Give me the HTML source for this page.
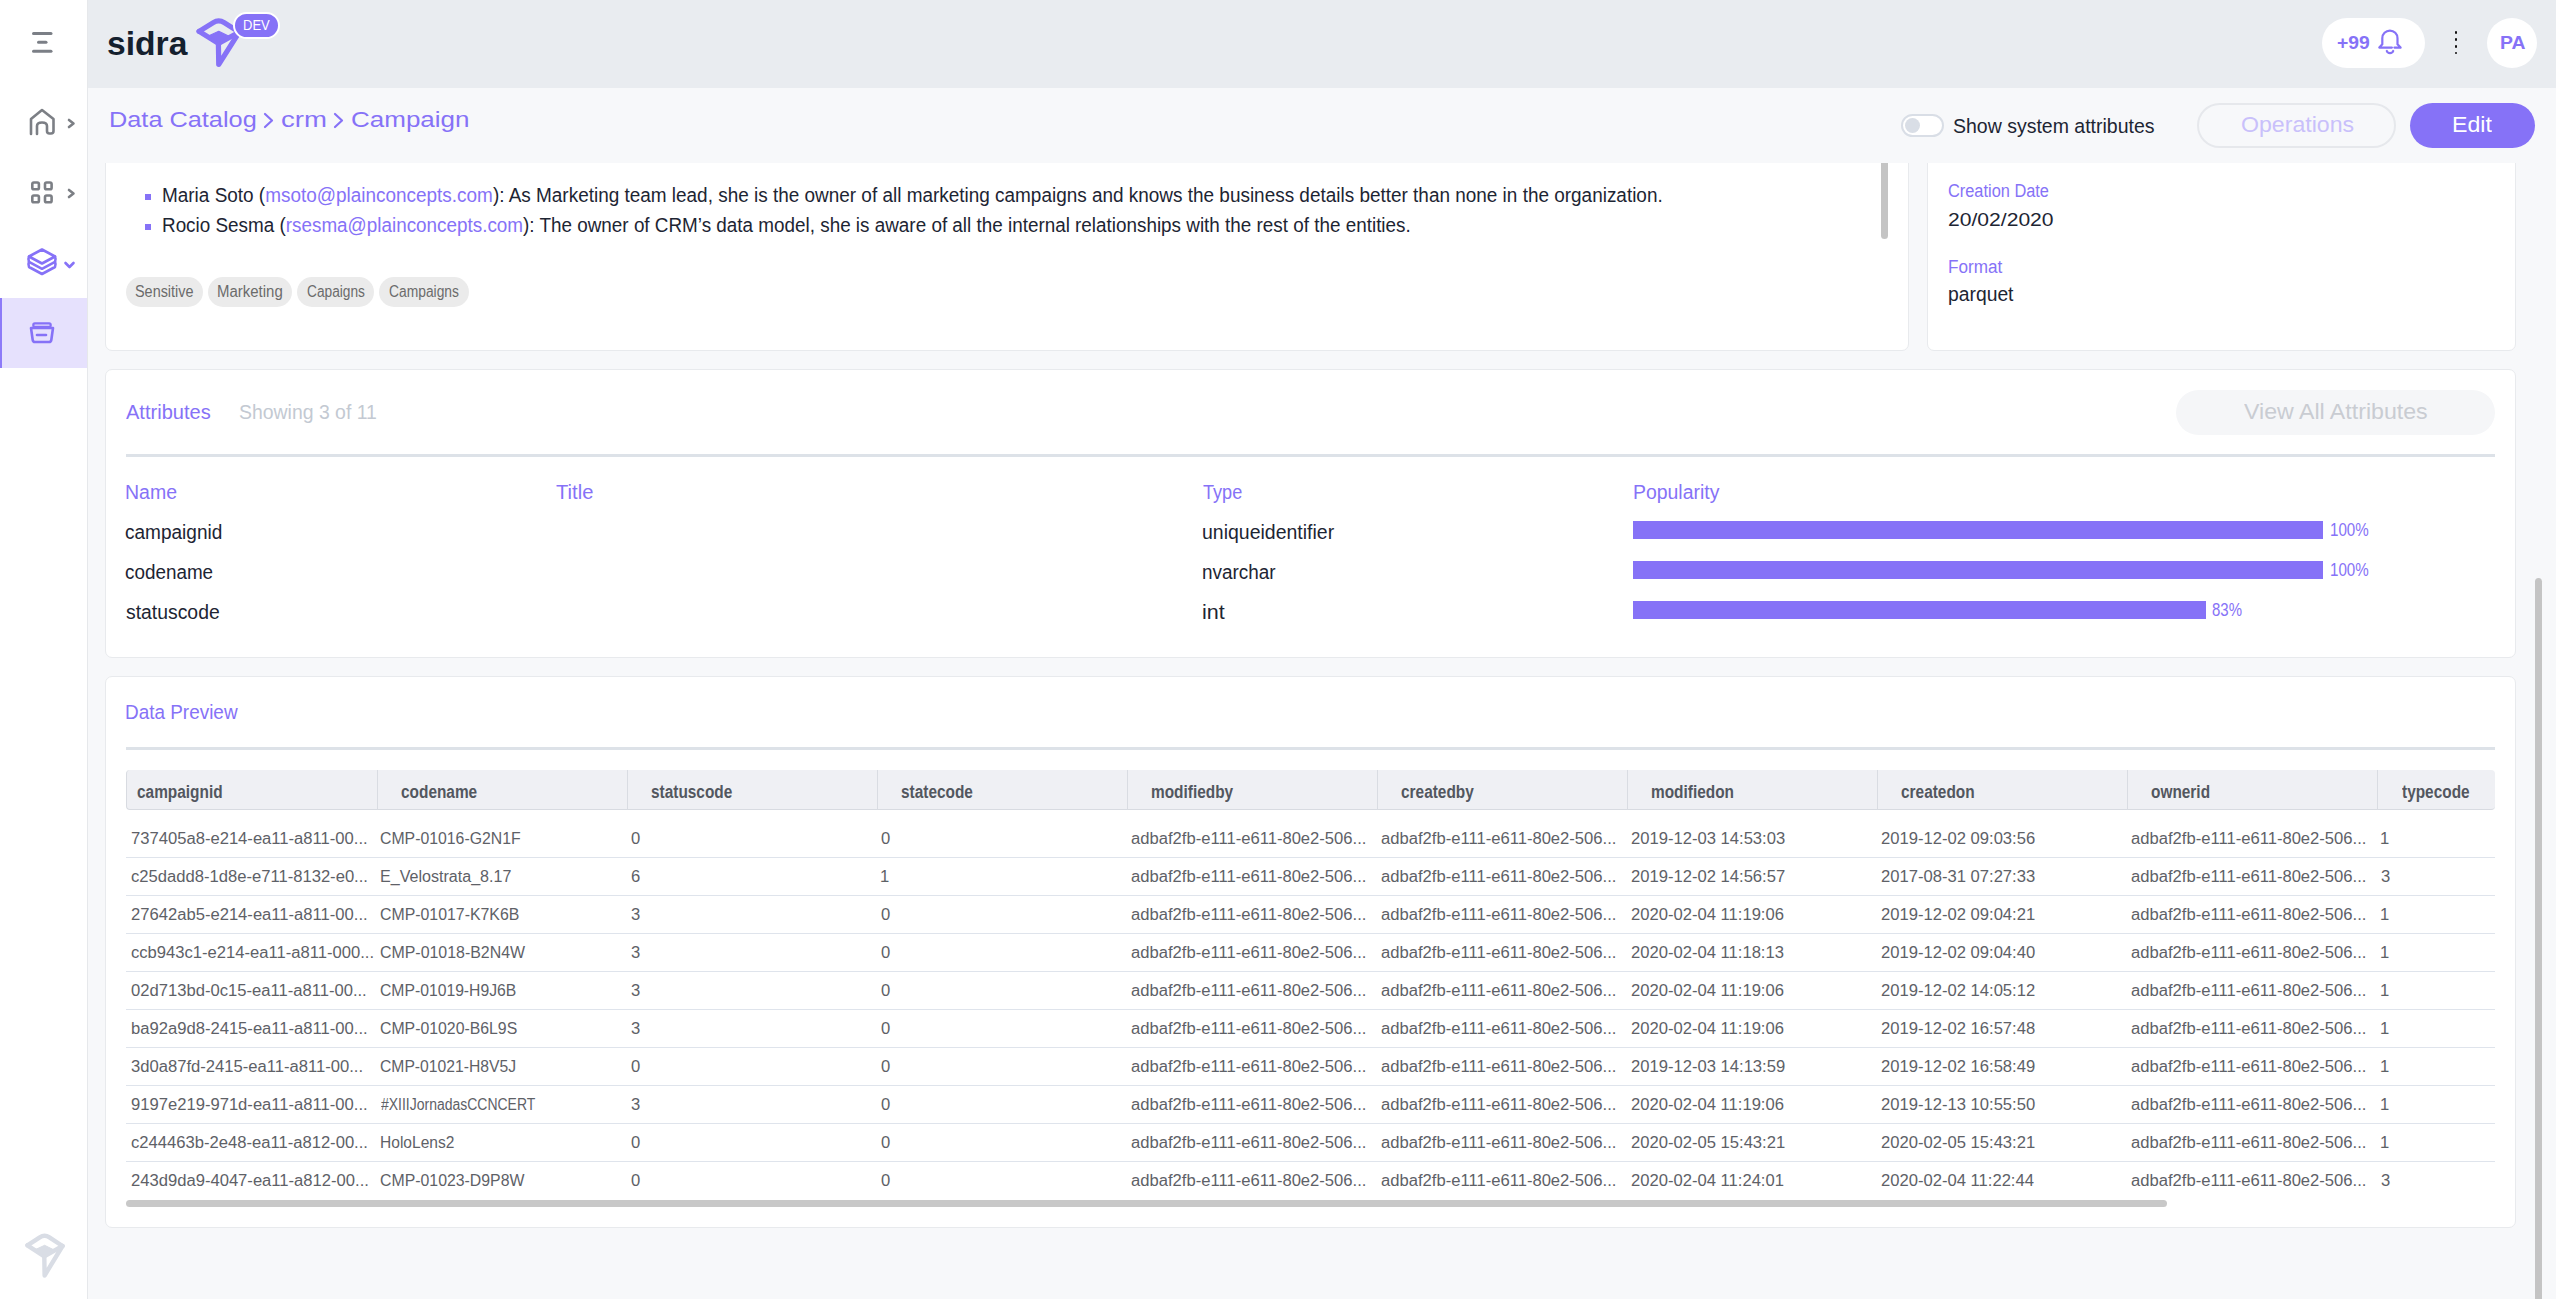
<!DOCTYPE html>
<html><head><meta charset="utf-8">
<style>
*{margin:0;padding:0;box-sizing:border-box}
html,body{width:2556px;height:1299px;overflow:hidden;background:#f7f8fa;font-family:"Liberation Sans",sans-serif}
#root{position:relative;width:2556px;height:1299px;overflow:hidden;background:#f7f8fa}
.a{position:absolute}
.t{position:absolute;line-height:1;white-space:nowrap;transform-origin:0 0}
.card{position:absolute;background:#fff;border:1px solid #e8eaed;border-radius:7px}
.tag{position:absolute;top:277px;height:30px;background:#ebebeb;border-radius:15px}
.hc{position:absolute;top:770px;height:40px;border-left:1px solid #d9dce2}
.rl{position:absolute;left:126px;width:2369px;height:1px;background:#dfe4ec}
</style></head><body><div id="root">
<div class="card" style="left:105px;top:120px;width:1804px;height:231px"></div>
<div class="card" style="left:1927px;top:120px;width:589px;height:231px"></div>
<div class="card" style="left:105px;top:369px;width:2411px;height:289px"></div>
<div class="card" style="left:105px;top:676px;width:2411px;height:552px"></div>
<div class="a" style="left:145px;top:194px;width:6px;height:6px;background:#8672f7"></div>
<div class="a" style="left:145px;top:224px;width:6px;height:6px;background:#8672f7"></div>
<div class="t" style="left:162.08px;top:185.07px;font-size:20px;color:#1d2533;transform:scaleX(0.9471);">Maria Soto (<span style="color:#8672f7">msoto@plainconcepts.com</span>): As Marketing team lead, she is the owner of all marketing campaigns and knows the business details better than none in the organization.</div>
<div class="t" style="left:162.09px;top:215.07px;font-size:20px;color:#1d2533;transform:scaleX(0.9435);">Rocio Sesma (<span style="color:#8672f7">rsesma@plainconcepts.com</span>): The owner of CRM’s data model, she is aware of all the internal relationships with the rest of the entities.</div>
<div class="a" style="left:1881px;top:150px;width:7px;height:89px;background:#c4c4c4;border-radius:4px"></div>
<div class="tag" style="left:126px;width:77px"></div>
<div class="t" style="left:135.28px;top:283.66px;font-size:16px;color:#6b6b6b;transform:scaleX(0.9012);">Sensitive</div>
<div class="tag" style="left:208px;width:84px"></div>
<div class="t" style="left:217.30px;top:283.66px;font-size:16px;color:#6b6b6b;transform:scaleX(0.9360);">Marketing</div>
<div class="tag" style="left:297px;width:77px"></div>
<div class="t" style="left:306.71px;top:283.66px;font-size:16px;color:#6b6b6b;transform:scaleX(0.8575);">Capaigns</div>
<div class="tag" style="left:379px;width:90px"></div>
<div class="t" style="left:388.81px;top:283.66px;font-size:16px;color:#6b6b6b;transform:scaleX(0.8647);">Campaigns</div>
<div class="t" style="left:1947.88px;top:181.56px;font-size:18px;color:#8672f7;transform:scaleX(0.9088);">Creation Date</div>
<div class="t" style="left:1947.85px;top:209.62px;font-size:19px;color:#1d2533;transform:scaleX(1.1104);">20/02/2020</div>
<div class="t" style="left:1947.53px;top:257.76px;font-size:18px;color:#8672f7;transform:scaleX(0.9524);">Format</div>
<div class="t" style="left:1947.74px;top:285.39px;font-size:19.5px;color:#1d2533;transform:scaleX(0.9901);">parquet</div>
<div class="t" style="left:126.00px;top:401.85px;font-size:20.5px;color:#8672f7;transform:scaleX(0.9779);">Attributes</div>
<div class="t" style="left:239.03px;top:401.85px;font-size:20.5px;color:#c3c9d2;transform:scaleX(0.9477);">Showing 3 of 11</div>
<div class="a" style="left:2176px;top:390px;width:319px;height:45px;background:#f5f6f8;border-radius:23px"></div>
<div class="t" style="left:2244.00px;top:400.78px;font-size:22px;color:#c9ccd2;transform:scaleX(1.0529);">View All Attributes</div>
<div class="a" style="left:126px;top:454px;width:2369px;height:3px;background:#dde2e8"></div>
<div class="t" style="left:124.54px;top:482.47px;font-size:20px;color:#8672f7;transform:scaleX(0.9744);">Name</div>
<div class="t" style="left:556.30px;top:482.47px;font-size:20px;color:#8672f7;transform:scaleX(1.0084);">Title</div>
<div class="t" style="left:1203.14px;top:482.47px;font-size:20px;color:#8672f7;transform:scaleX(0.9048);">Type</div>
<div class="t" style="left:1632.75px;top:482.47px;font-size:20px;color:#8672f7;transform:scaleX(0.9714);">Popularity</div>
<div class="t" style="left:125.34px;top:522.07px;font-size:20px;color:#1d2533;transform:scaleX(0.9511);">campaignid</div>
<div class="t" style="left:1202.33px;top:522.07px;font-size:20px;color:#1d2533;transform:scaleX(0.9739);">uniqueidentifier</div>
<div class="a" style="left:1633px;top:521px;width:690px;height:18px;background:#8672f7"></div>
<div class="t" style="left:2329.84px;top:521.73px;font-size:17.8px;color:#8672f7;transform:scaleX(0.8530);">100%</div>
<div class="t" style="left:125.35px;top:562.07px;font-size:20px;color:#1d2533;transform:scaleX(0.9432);">codename</div>
<div class="t" style="left:1202.18px;top:562.07px;font-size:20px;color:#1d2533;transform:scaleX(0.9462);">nvarchar</div>
<div class="a" style="left:1633px;top:561px;width:690px;height:18px;background:#8672f7"></div>
<div class="t" style="left:2329.84px;top:561.73px;font-size:17.8px;color:#8672f7;transform:scaleX(0.8530);">100%</div>
<div class="t" style="left:125.52px;top:602.07px;font-size:20px;color:#1d2533;transform:scaleX(0.9685);">statuscode</div>
<div class="t" style="left:1201.99px;top:602.07px;font-size:20px;color:#1d2533;transform:scaleX(1.0765);">int</div>
<div class="a" style="left:1633px;top:601px;width:573px;height:18px;background:#8672f7"></div>
<div class="t" style="left:2211.60px;top:601.73px;font-size:17.8px;color:#8672f7;transform:scaleX(0.8427);">83%</div>
<div class="t" style="left:124.89px;top:702.35px;font-size:20.5px;color:#8672f7;transform:scaleX(0.9232);">Data Preview</div>
<div class="a" style="left:126px;top:747px;width:2369px;height:3px;background:#dde2e8"></div>
<div class="a" style="left:126px;top:770px;width:2369px;height:40px;background:#eff0f4;border-bottom:1px solid #d8dbe1;border-left:1px solid #d8dbe1;border-radius:4px"></div>
<div class="t" style="left:137.48px;top:782.76px;font-size:18px;color:#53575f;font-weight:bold;transform:scaleX(0.8557);">campaignid</div>
<div class="hc" style="left:377px"></div>
<div class="t" style="left:401.28px;top:782.76px;font-size:18px;color:#53575f;font-weight:bold;transform:scaleX(0.8557);">codename</div>
<div class="hc" style="left:627px"></div>
<div class="t" style="left:651.28px;top:782.76px;font-size:18px;color:#53575f;font-weight:bold;transform:scaleX(0.8557);">statuscode</div>
<div class="hc" style="left:877px"></div>
<div class="t" style="left:901.28px;top:782.76px;font-size:18px;color:#53575f;font-weight:bold;transform:scaleX(0.8557);">statecode</div>
<div class="hc" style="left:1127px"></div>
<div class="t" style="left:1150.98px;top:782.76px;font-size:18px;color:#53575f;font-weight:bold;transform:scaleX(0.8557);">modifiedby</div>
<div class="hc" style="left:1377px"></div>
<div class="t" style="left:1401.28px;top:782.76px;font-size:18px;color:#53575f;font-weight:bold;transform:scaleX(0.8557);">createdby</div>
<div class="hc" style="left:1627px"></div>
<div class="t" style="left:1650.98px;top:782.76px;font-size:18px;color:#53575f;font-weight:bold;transform:scaleX(0.8557);">modifiedon</div>
<div class="hc" style="left:1877px"></div>
<div class="t" style="left:1901.28px;top:782.76px;font-size:18px;color:#53575f;font-weight:bold;transform:scaleX(0.8557);">createdon</div>
<div class="hc" style="left:2127px"></div>
<div class="t" style="left:2151.28px;top:782.76px;font-size:18px;color:#53575f;font-weight:bold;transform:scaleX(0.8557);">ownerid</div>
<div class="hc" style="left:2377px"></div>
<div class="t" style="left:2401.75px;top:782.76px;font-size:18px;color:#53575f;font-weight:bold;transform:scaleX(0.8557);">typecode</div>
<div class="t" style="left:130.77px;top:830.96px;font-size:16px;color:#5e6167;transform:scaleX(1.0378);">737405a8-e214-ea11-a811-00...</div>
<div class="t" style="left:380.21px;top:830.96px;font-size:16px;color:#5e6167;transform:scaleX(0.9886);">CMP-01016-G2N1F</div>
<div class="t" style="left:630.94px;top:830.96px;font-size:16px;color:#5e6167;transform:scaleX(1.0378);">0</div>
<div class="t" style="left:880.94px;top:830.96px;font-size:16px;color:#5e6167;transform:scaleX(1.0378);">0</div>
<div class="t" style="left:1130.94px;top:830.96px;font-size:16px;color:#5e6167;transform:scaleX(1.0378);">adbaf2fb-e111-e611-80e2-506...</div>
<div class="t" style="left:1380.94px;top:830.96px;font-size:16px;color:#5e6167;transform:scaleX(1.0378);">adbaf2fb-e111-e611-80e2-506...</div>
<div class="t" style="left:1630.77px;top:830.96px;font-size:16px;color:#5e6167;transform:scaleX(1.0378);">2019-12-03 14:53:03</div>
<div class="t" style="left:1880.77px;top:830.96px;font-size:16px;color:#5e6167;transform:scaleX(1.0378);">2019-12-02 09:03:56</div>
<div class="t" style="left:2130.94px;top:830.96px;font-size:16px;color:#5e6167;transform:scaleX(1.0378);">adbaf2fb-e111-e611-80e2-506...</div>
<div class="t" style="left:2380.44px;top:830.96px;font-size:16px;color:#5e6167;transform:scaleX(1.0378);">1</div>
<div class="rl" style="top:857px"></div>
<div class="t" style="left:130.94px;top:868.96px;font-size:16px;color:#5e6167;transform:scaleX(1.0378);">c25dadd8-1d8e-e711-8132-e0...</div>
<div class="t" style="left:379.71px;top:868.96px;font-size:16px;color:#5e6167;transform:scaleX(1.0047);">E_Velostrata_8.17</div>
<div class="t" style="left:630.77px;top:868.96px;font-size:16px;color:#5e6167;transform:scaleX(1.0378);">6</div>
<div class="t" style="left:880.44px;top:868.96px;font-size:16px;color:#5e6167;transform:scaleX(1.0378);">1</div>
<div class="t" style="left:1130.94px;top:868.96px;font-size:16px;color:#5e6167;transform:scaleX(1.0378);">adbaf2fb-e111-e611-80e2-506...</div>
<div class="t" style="left:1380.94px;top:868.96px;font-size:16px;color:#5e6167;transform:scaleX(1.0378);">adbaf2fb-e111-e611-80e2-506...</div>
<div class="t" style="left:1630.77px;top:868.96px;font-size:16px;color:#5e6167;transform:scaleX(1.0378);">2019-12-02 14:56:57</div>
<div class="t" style="left:1880.77px;top:868.96px;font-size:16px;color:#5e6167;transform:scaleX(1.0378);">2017-08-31 07:27:33</div>
<div class="t" style="left:2130.94px;top:868.96px;font-size:16px;color:#5e6167;transform:scaleX(1.0378);">adbaf2fb-e111-e611-80e2-506...</div>
<div class="t" style="left:2380.94px;top:868.96px;font-size:16px;color:#5e6167;transform:scaleX(1.0378);">3</div>
<div class="rl" style="top:895px"></div>
<div class="t" style="left:130.77px;top:906.96px;font-size:16px;color:#5e6167;transform:scaleX(1.0378);">27642ab5-e214-ea11-a811-00...</div>
<div class="t" style="left:380.21px;top:906.96px;font-size:16px;color:#5e6167;transform:scaleX(0.9915);">CMP-01017-K7K6B</div>
<div class="t" style="left:630.94px;top:906.96px;font-size:16px;color:#5e6167;transform:scaleX(1.0378);">3</div>
<div class="t" style="left:880.94px;top:906.96px;font-size:16px;color:#5e6167;transform:scaleX(1.0378);">0</div>
<div class="t" style="left:1130.94px;top:906.96px;font-size:16px;color:#5e6167;transform:scaleX(1.0378);">adbaf2fb-e111-e611-80e2-506...</div>
<div class="t" style="left:1380.94px;top:906.96px;font-size:16px;color:#5e6167;transform:scaleX(1.0378);">adbaf2fb-e111-e611-80e2-506...</div>
<div class="t" style="left:1630.77px;top:906.96px;font-size:16px;color:#5e6167;transform:scaleX(1.0378);">2020-02-04 11:19:06</div>
<div class="t" style="left:1880.77px;top:906.96px;font-size:16px;color:#5e6167;transform:scaleX(1.0378);">2019-12-02 09:04:21</div>
<div class="t" style="left:2130.94px;top:906.96px;font-size:16px;color:#5e6167;transform:scaleX(1.0378);">adbaf2fb-e111-e611-80e2-506...</div>
<div class="t" style="left:2380.44px;top:906.96px;font-size:16px;color:#5e6167;transform:scaleX(1.0378);">1</div>
<div class="rl" style="top:933px"></div>
<div class="t" style="left:130.94px;top:944.96px;font-size:16px;color:#5e6167;transform:scaleX(1.0378);">ccb943c1-e214-ea11-a811-000...</div>
<div class="t" style="left:380.20px;top:944.96px;font-size:16px;color:#5e6167;transform:scaleX(0.9948);">CMP-01018-B2N4W</div>
<div class="t" style="left:630.94px;top:944.96px;font-size:16px;color:#5e6167;transform:scaleX(1.0378);">3</div>
<div class="t" style="left:880.94px;top:944.96px;font-size:16px;color:#5e6167;transform:scaleX(1.0378);">0</div>
<div class="t" style="left:1130.94px;top:944.96px;font-size:16px;color:#5e6167;transform:scaleX(1.0378);">adbaf2fb-e111-e611-80e2-506...</div>
<div class="t" style="left:1380.94px;top:944.96px;font-size:16px;color:#5e6167;transform:scaleX(1.0378);">adbaf2fb-e111-e611-80e2-506...</div>
<div class="t" style="left:1630.77px;top:944.96px;font-size:16px;color:#5e6167;transform:scaleX(1.0378);">2020-02-04 11:18:13</div>
<div class="t" style="left:1880.77px;top:944.96px;font-size:16px;color:#5e6167;transform:scaleX(1.0378);">2019-12-02 09:04:40</div>
<div class="t" style="left:2130.94px;top:944.96px;font-size:16px;color:#5e6167;transform:scaleX(1.0378);">adbaf2fb-e111-e611-80e2-506...</div>
<div class="t" style="left:2380.44px;top:944.96px;font-size:16px;color:#5e6167;transform:scaleX(1.0378);">1</div>
<div class="rl" style="top:971px"></div>
<div class="t" style="left:130.94px;top:982.96px;font-size:16px;color:#5e6167;transform:scaleX(1.0378);">02d713bd-0c15-ea11-a811-00...</div>
<div class="t" style="left:380.21px;top:982.96px;font-size:16px;color:#5e6167;transform:scaleX(0.9824);">CMP-01019-H9J6B</div>
<div class="t" style="left:630.94px;top:982.96px;font-size:16px;color:#5e6167;transform:scaleX(1.0378);">3</div>
<div class="t" style="left:880.94px;top:982.96px;font-size:16px;color:#5e6167;transform:scaleX(1.0378);">0</div>
<div class="t" style="left:1130.94px;top:982.96px;font-size:16px;color:#5e6167;transform:scaleX(1.0378);">adbaf2fb-e111-e611-80e2-506...</div>
<div class="t" style="left:1380.94px;top:982.96px;font-size:16px;color:#5e6167;transform:scaleX(1.0378);">adbaf2fb-e111-e611-80e2-506...</div>
<div class="t" style="left:1630.77px;top:982.96px;font-size:16px;color:#5e6167;transform:scaleX(1.0378);">2020-02-04 11:19:06</div>
<div class="t" style="left:1880.77px;top:982.96px;font-size:16px;color:#5e6167;transform:scaleX(1.0378);">2019-12-02 14:05:12</div>
<div class="t" style="left:2130.94px;top:982.96px;font-size:16px;color:#5e6167;transform:scaleX(1.0378);">adbaf2fb-e111-e611-80e2-506...</div>
<div class="t" style="left:2380.44px;top:982.96px;font-size:16px;color:#5e6167;transform:scaleX(1.0378);">1</div>
<div class="rl" style="top:1009px"></div>
<div class="t" style="left:130.60px;top:1020.96px;font-size:16px;color:#5e6167;transform:scaleX(1.0378);">ba92a9d8-2415-ea11-a811-00...</div>
<div class="t" style="left:380.21px;top:1020.96px;font-size:16px;color:#5e6167;transform:scaleX(0.9889);">CMP-01020-B6L9S</div>
<div class="t" style="left:630.94px;top:1020.96px;font-size:16px;color:#5e6167;transform:scaleX(1.0378);">3</div>
<div class="t" style="left:880.94px;top:1020.96px;font-size:16px;color:#5e6167;transform:scaleX(1.0378);">0</div>
<div class="t" style="left:1130.94px;top:1020.96px;font-size:16px;color:#5e6167;transform:scaleX(1.0378);">adbaf2fb-e111-e611-80e2-506...</div>
<div class="t" style="left:1380.94px;top:1020.96px;font-size:16px;color:#5e6167;transform:scaleX(1.0378);">adbaf2fb-e111-e611-80e2-506...</div>
<div class="t" style="left:1630.77px;top:1020.96px;font-size:16px;color:#5e6167;transform:scaleX(1.0378);">2020-02-04 11:19:06</div>
<div class="t" style="left:1880.77px;top:1020.96px;font-size:16px;color:#5e6167;transform:scaleX(1.0378);">2019-12-02 16:57:48</div>
<div class="t" style="left:2130.94px;top:1020.96px;font-size:16px;color:#5e6167;transform:scaleX(1.0378);">adbaf2fb-e111-e611-80e2-506...</div>
<div class="t" style="left:2380.44px;top:1020.96px;font-size:16px;color:#5e6167;transform:scaleX(1.0378);">1</div>
<div class="rl" style="top:1047px"></div>
<div class="t" style="left:130.94px;top:1058.96px;font-size:16px;color:#5e6167;transform:scaleX(1.0378);">3d0a87fd-2415-ea11-a811-00...</div>
<div class="t" style="left:380.22px;top:1058.96px;font-size:16px;color:#5e6167;transform:scaleX(0.9803);">CMP-01021-H8V5J</div>
<div class="t" style="left:630.94px;top:1058.96px;font-size:16px;color:#5e6167;transform:scaleX(1.0378);">0</div>
<div class="t" style="left:880.94px;top:1058.96px;font-size:16px;color:#5e6167;transform:scaleX(1.0378);">0</div>
<div class="t" style="left:1130.94px;top:1058.96px;font-size:16px;color:#5e6167;transform:scaleX(1.0378);">adbaf2fb-e111-e611-80e2-506...</div>
<div class="t" style="left:1380.94px;top:1058.96px;font-size:16px;color:#5e6167;transform:scaleX(1.0378);">adbaf2fb-e111-e611-80e2-506...</div>
<div class="t" style="left:1630.77px;top:1058.96px;font-size:16px;color:#5e6167;transform:scaleX(1.0378);">2019-12-03 14:13:59</div>
<div class="t" style="left:1880.77px;top:1058.96px;font-size:16px;color:#5e6167;transform:scaleX(1.0378);">2019-12-02 16:58:49</div>
<div class="t" style="left:2130.94px;top:1058.96px;font-size:16px;color:#5e6167;transform:scaleX(1.0378);">adbaf2fb-e111-e611-80e2-506...</div>
<div class="t" style="left:2380.44px;top:1058.96px;font-size:16px;color:#5e6167;transform:scaleX(1.0378);">1</div>
<div class="rl" style="top:1085px"></div>
<div class="t" style="left:130.77px;top:1096.96px;font-size:16px;color:#5e6167;transform:scaleX(1.0378);">9197e219-971d-ea11-a811-00...</div>
<div class="t" style="left:381.00px;top:1096.96px;font-size:16px;color:#5e6167;transform:scaleX(0.8734);">#XIIIJornadasCCNCERT</div>
<div class="t" style="left:630.94px;top:1096.96px;font-size:16px;color:#5e6167;transform:scaleX(1.0378);">3</div>
<div class="t" style="left:880.94px;top:1096.96px;font-size:16px;color:#5e6167;transform:scaleX(1.0378);">0</div>
<div class="t" style="left:1130.94px;top:1096.96px;font-size:16px;color:#5e6167;transform:scaleX(1.0378);">adbaf2fb-e111-e611-80e2-506...</div>
<div class="t" style="left:1380.94px;top:1096.96px;font-size:16px;color:#5e6167;transform:scaleX(1.0378);">adbaf2fb-e111-e611-80e2-506...</div>
<div class="t" style="left:1630.77px;top:1096.96px;font-size:16px;color:#5e6167;transform:scaleX(1.0378);">2020-02-04 11:19:06</div>
<div class="t" style="left:1880.77px;top:1096.96px;font-size:16px;color:#5e6167;transform:scaleX(1.0378);">2019-12-13 10:55:50</div>
<div class="t" style="left:2130.94px;top:1096.96px;font-size:16px;color:#5e6167;transform:scaleX(1.0378);">adbaf2fb-e111-e611-80e2-506...</div>
<div class="t" style="left:2380.44px;top:1096.96px;font-size:16px;color:#5e6167;transform:scaleX(1.0378);">1</div>
<div class="rl" style="top:1123px"></div>
<div class="t" style="left:130.94px;top:1134.96px;font-size:16px;color:#5e6167;transform:scaleX(1.0378);">c244463b-2e48-ea11-a812-00...</div>
<div class="t" style="left:379.76px;top:1134.96px;font-size:16px;color:#5e6167;transform:scaleX(0.9718);">HoloLens2</div>
<div class="t" style="left:630.94px;top:1134.96px;font-size:16px;color:#5e6167;transform:scaleX(1.0378);">0</div>
<div class="t" style="left:880.94px;top:1134.96px;font-size:16px;color:#5e6167;transform:scaleX(1.0378);">0</div>
<div class="t" style="left:1130.94px;top:1134.96px;font-size:16px;color:#5e6167;transform:scaleX(1.0378);">adbaf2fb-e111-e611-80e2-506...</div>
<div class="t" style="left:1380.94px;top:1134.96px;font-size:16px;color:#5e6167;transform:scaleX(1.0378);">adbaf2fb-e111-e611-80e2-506...</div>
<div class="t" style="left:1630.77px;top:1134.96px;font-size:16px;color:#5e6167;transform:scaleX(1.0378);">2020-02-05 15:43:21</div>
<div class="t" style="left:1880.77px;top:1134.96px;font-size:16px;color:#5e6167;transform:scaleX(1.0378);">2020-02-05 15:43:21</div>
<div class="t" style="left:2130.94px;top:1134.96px;font-size:16px;color:#5e6167;transform:scaleX(1.0378);">adbaf2fb-e111-e611-80e2-506...</div>
<div class="t" style="left:2380.44px;top:1134.96px;font-size:16px;color:#5e6167;transform:scaleX(1.0378);">1</div>
<div class="rl" style="top:1161px"></div>
<div class="t" style="left:130.77px;top:1172.96px;font-size:16px;color:#5e6167;transform:scaleX(1.0378);">243d9da9-4047-ea11-a812-00...</div>
<div class="t" style="left:380.21px;top:1172.96px;font-size:16px;color:#5e6167;transform:scaleX(0.9906);">CMP-01023-D9P8W</div>
<div class="t" style="left:630.94px;top:1172.96px;font-size:16px;color:#5e6167;transform:scaleX(1.0378);">0</div>
<div class="t" style="left:880.94px;top:1172.96px;font-size:16px;color:#5e6167;transform:scaleX(1.0378);">0</div>
<div class="t" style="left:1130.94px;top:1172.96px;font-size:16px;color:#5e6167;transform:scaleX(1.0378);">adbaf2fb-e111-e611-80e2-506...</div>
<div class="t" style="left:1380.94px;top:1172.96px;font-size:16px;color:#5e6167;transform:scaleX(1.0378);">adbaf2fb-e111-e611-80e2-506...</div>
<div class="t" style="left:1630.77px;top:1172.96px;font-size:16px;color:#5e6167;transform:scaleX(1.0378);">2020-02-04 11:24:01</div>
<div class="t" style="left:1880.77px;top:1172.96px;font-size:16px;color:#5e6167;transform:scaleX(1.0378);">2020-02-04 11:22:44</div>
<div class="t" style="left:2130.94px;top:1172.96px;font-size:16px;color:#5e6167;transform:scaleX(1.0378);">adbaf2fb-e111-e611-80e2-506...</div>
<div class="t" style="left:2380.94px;top:1172.96px;font-size:16px;color:#5e6167;transform:scaleX(1.0378);">3</div>
<div class="a" style="left:126px;top:1200px;width:2041px;height:7px;background:#c8c8c8;border-radius:4px"></div>
<div class="a" style="left:0;top:0;width:88px;height:1299px;background:#fff;border-right:1px solid #e6e8eb"></div>
<svg class="a" style="left:0;top:0" width="88" height="400" viewBox="0 0 88 400">
 <g stroke="#7b7f86" stroke-width="3" stroke-linecap="round" fill="none">
  <line x1="33.5" y1="33.5" x2="51" y2="33.5"/>
  <line x1="38.5" y1="42.3" x2="46" y2="42.3"/>
  <line x1="33.5" y1="51.2" x2="51" y2="51.2"/>
 </g>
 <g stroke="#7c7f85" stroke-width="2.6" stroke-linecap="round" stroke-linejoin="round" fill="none">
  <path d="M31,134 V119 L42,110 L53.5,119 V131 Q53.5,133.5 51,133.5 H49.5 Q47,133.5 47,131 V126 Q47,122.5 42,122.5 Q37,122.5 37,126 V134"/>
  <path d="M69,120 L73.5,123.5 L69,127"/>
  <rect x="32.3" y="182.5" width="6.6" height="6.8" rx="1.6"/>
  <rect x="45" y="182.5" width="6.6" height="6.8" rx="1.6"/>
  <rect x="32.3" y="195.5" width="6.6" height="6.8" rx="1.6"/>
  <rect x="45" y="195.5" width="6.6" height="6.8" rx="1.6"/>
  <path d="M69,190 L73.5,193.5 L69,197"/>
 </g>
 <rect x="0" y="298" width="87" height="70" fill="#e6e1fd"/>
 <rect x="0" y="298" width="2" height="70" fill="#8d7af8"/>
 <g stroke="#8672f7" stroke-width="2.6" stroke-linecap="round" stroke-linejoin="round" fill="none">
  <path d="M42,249.5 L55,256.5 L42,263.5 L29,256.5 Z"/>
  <path d="M29,256.5 Q27.8,259.2 29,261.8 L42,268.8 L55,261.8 Q56.2,259.2 55,256.5"/>
  <path d="M29,261.8 Q27.8,264.4 29,267 L42,274 L55,267 Q56.2,264.4 55,261.8"/>
  <path d="M65.5,263 L69.5,267 L73.5,263"/>
  <rect x="33.3" y="323.4" width="17.4" height="3.4" rx="1.5" stroke-width="2.2"/>
  <path d="M31,328 H53 L51.3,340 Q51,342 49,342 H35 Q33,342 32.7,340 Z"/>
  <path d="M37,335 H46"/>
 </g>
</svg>
<svg class="a" style="left:15px;top:1225px" width="60" height="60" viewBox="0 0 60 60"><g fill="none" stroke="#d9dde5" stroke-width="4.4" stroke-linejoin="round" stroke-linecap="round">
 <path d="M12.4,20.3 L24.8,12.3 Q29.6,9.2 34.4,12.4 L47.5,21"/>
 <path d="M12.4,20.3 L29.3,31.3 L47.5,21"/>
 <path d="M29.3,31.3 L29.6,50.5 L47.5,21"/>
 <path d="M20.5,24.5 L29.6,20.3 L38.2,24.5 L29.3,30 Z" fill="#d9dde5" stroke-width="1"/>
</g></svg>
<div class="a" style="left:88px;top:0;width:2468px;height:88px;background:#e9ecf0"></div>
<div class="a" style="left:88px;top:88px;width:2468px;height:75px;background:#f7f8fa"></div>
<div class="t" style="left:106.66px;top:26.22px;font-size:34px;color:#14202e;font-weight:bold;transform:scaleX(0.9887);">sidra</div>
<svg class="a" style="left:184.8px;top:8.77px" width="68.4" height="66" viewBox="0 0 60 60" preserveAspectRatio="none"><g fill="none" stroke="#8672f7" stroke-width="4.6" stroke-linejoin="round" stroke-linecap="round">
 <path d="M12.4,20.3 L24.8,12.3 Q29.6,9.2 34.4,12.4 L47.5,21"/>
 <path d="M12.4,20.3 L29.3,31.3 L47.5,21"/>
 <path d="M29.3,31.3 L29.6,50.5 L47.5,21"/>
 <path d="M20.5,24.5 L29.6,20.3 L38.2,24.5 L29.3,30 Z" fill="#8672f7" stroke-width="1"/>
</g></svg>
<div class="a" style="left:233px;top:11.5px;width:47px;height:27px;background:#8672f7;border:2.5px solid #fff;border-radius:14px"></div>
<div class="t" style="left:242.86px;top:17.20px;font-size:15px;color:#fff;transform:scaleX(0.8663);">DEV</div>
<div class="a" style="left:2322px;top:18px;width:103px;height:50px;background:#fff;border-radius:25px"></div>
<div class="t" style="left:2337.13px;top:32.92px;font-size:19px;color:#8672f7;font-weight:bold;transform:scaleX(1.0169);">+99</div>
<svg class="a" style="left:2376px;top:26px" width="28" height="30" viewBox="0 0 28 30">
 <g stroke="#8672f7" stroke-width="2.2" fill="none" stroke-linecap="round" stroke-linejoin="round">
  <path d="M15.9,21.6 H3.3 L6.3,18.3 V12.2 A7.6,7.6 0 0 1 21.5,12.2 V18.3 L24.6,21.6 H18.4"/>
  <path d="M10.8,25 A3.3,2.7 0 0 0 17.2,25"/>
 </g></svg>
<div class="a" style="left:2454.6px;top:31.400000000000002px;width:2.6px;height:2.6px;background:#111;border-radius:1.3px"></div>
<div class="a" style="left:2454.6px;top:38.300000000000004px;width:2.6px;height:2.6px;background:#111;border-radius:1.3px"></div>
<div class="a" style="left:2454.6px;top:45.1px;width:2.6px;height:2.6px;background:#111;border-radius:1.3px"></div>
<div class="a" style="left:2454.6px;top:51.900000000000006px;width:2.6px;height:2.6px;background:#111;border-radius:1.3px"></div>
<div class="a" style="left:2487px;top:18px;width:50px;height:50px;background:#fff;border-radius:25px"></div>
<div class="t" style="left:2499.65px;top:32.92px;font-size:19px;color:#8672f7;font-weight:bold;transform:scaleX(1.0181);">PA</div>
<div class="t" style="left:108.98px;top:109.38px;font-size:22px;color:#8672f7;transform:scaleX(1.1503);">Data Catalog</div>
<svg class="a" style="left:262px;top:111px" width="13" height="19" viewBox="0 0 13 19"><path d="M3,3 L10,9.5 L3,16" stroke="#8672f7" stroke-width="2.2" fill="none" stroke-linecap="round" stroke-linejoin="round"/></svg>
<div class="t" style="left:281.10px;top:109.38px;font-size:22px;color:#8672f7;transform:scaleX(1.2529);">crm</div>
<svg class="a" style="left:332px;top:111px" width="13" height="19" viewBox="0 0 13 19"><path d="M3,3 L10,9.5 L3,16" stroke="#8672f7" stroke-width="2.2" fill="none" stroke-linecap="round" stroke-linejoin="round"/></svg>
<div class="t" style="left:351.30px;top:109.38px;font-size:22px;color:#8672f7;transform:scaleX(1.1814);">Campaign</div>
<div class="a" style="left:1901px;top:114px;width:43px;height:23px;border:2.8px solid #d9dee6;border-radius:12px;background:#fff"></div>
<div class="a" style="left:1905px;top:118px;width:14.6px;height:14.6px;border-radius:8px;background:#d9dee6"></div>
<div class="t" style="left:1953.03px;top:115.65px;font-size:20.5px;color:#1d2533;transform:scaleX(0.9509);">Show system attributes</div>
<div class="a" style="left:2197px;top:103px;width:199px;height:45px;border:2px solid #e6e8ec;border-radius:23px"></div>
<div class="t" style="left:2240.64px;top:114.38px;font-size:22px;color:#c9c0fa;transform:scaleX(1.0508);">Operations</div>
<div class="a" style="left:2410px;top:103px;width:125px;height:45px;background:#8672f7;border-radius:23px"></div>
<div class="t" style="left:2452.05px;top:114.38px;font-size:22px;color:#fff;transform:scaleX(1.0504);">Edit</div>
<div class="a" style="left:2535px;top:578px;width:7px;height:730px;background:#c4c4c4;border-radius:4px"></div>
</div></body></html>
